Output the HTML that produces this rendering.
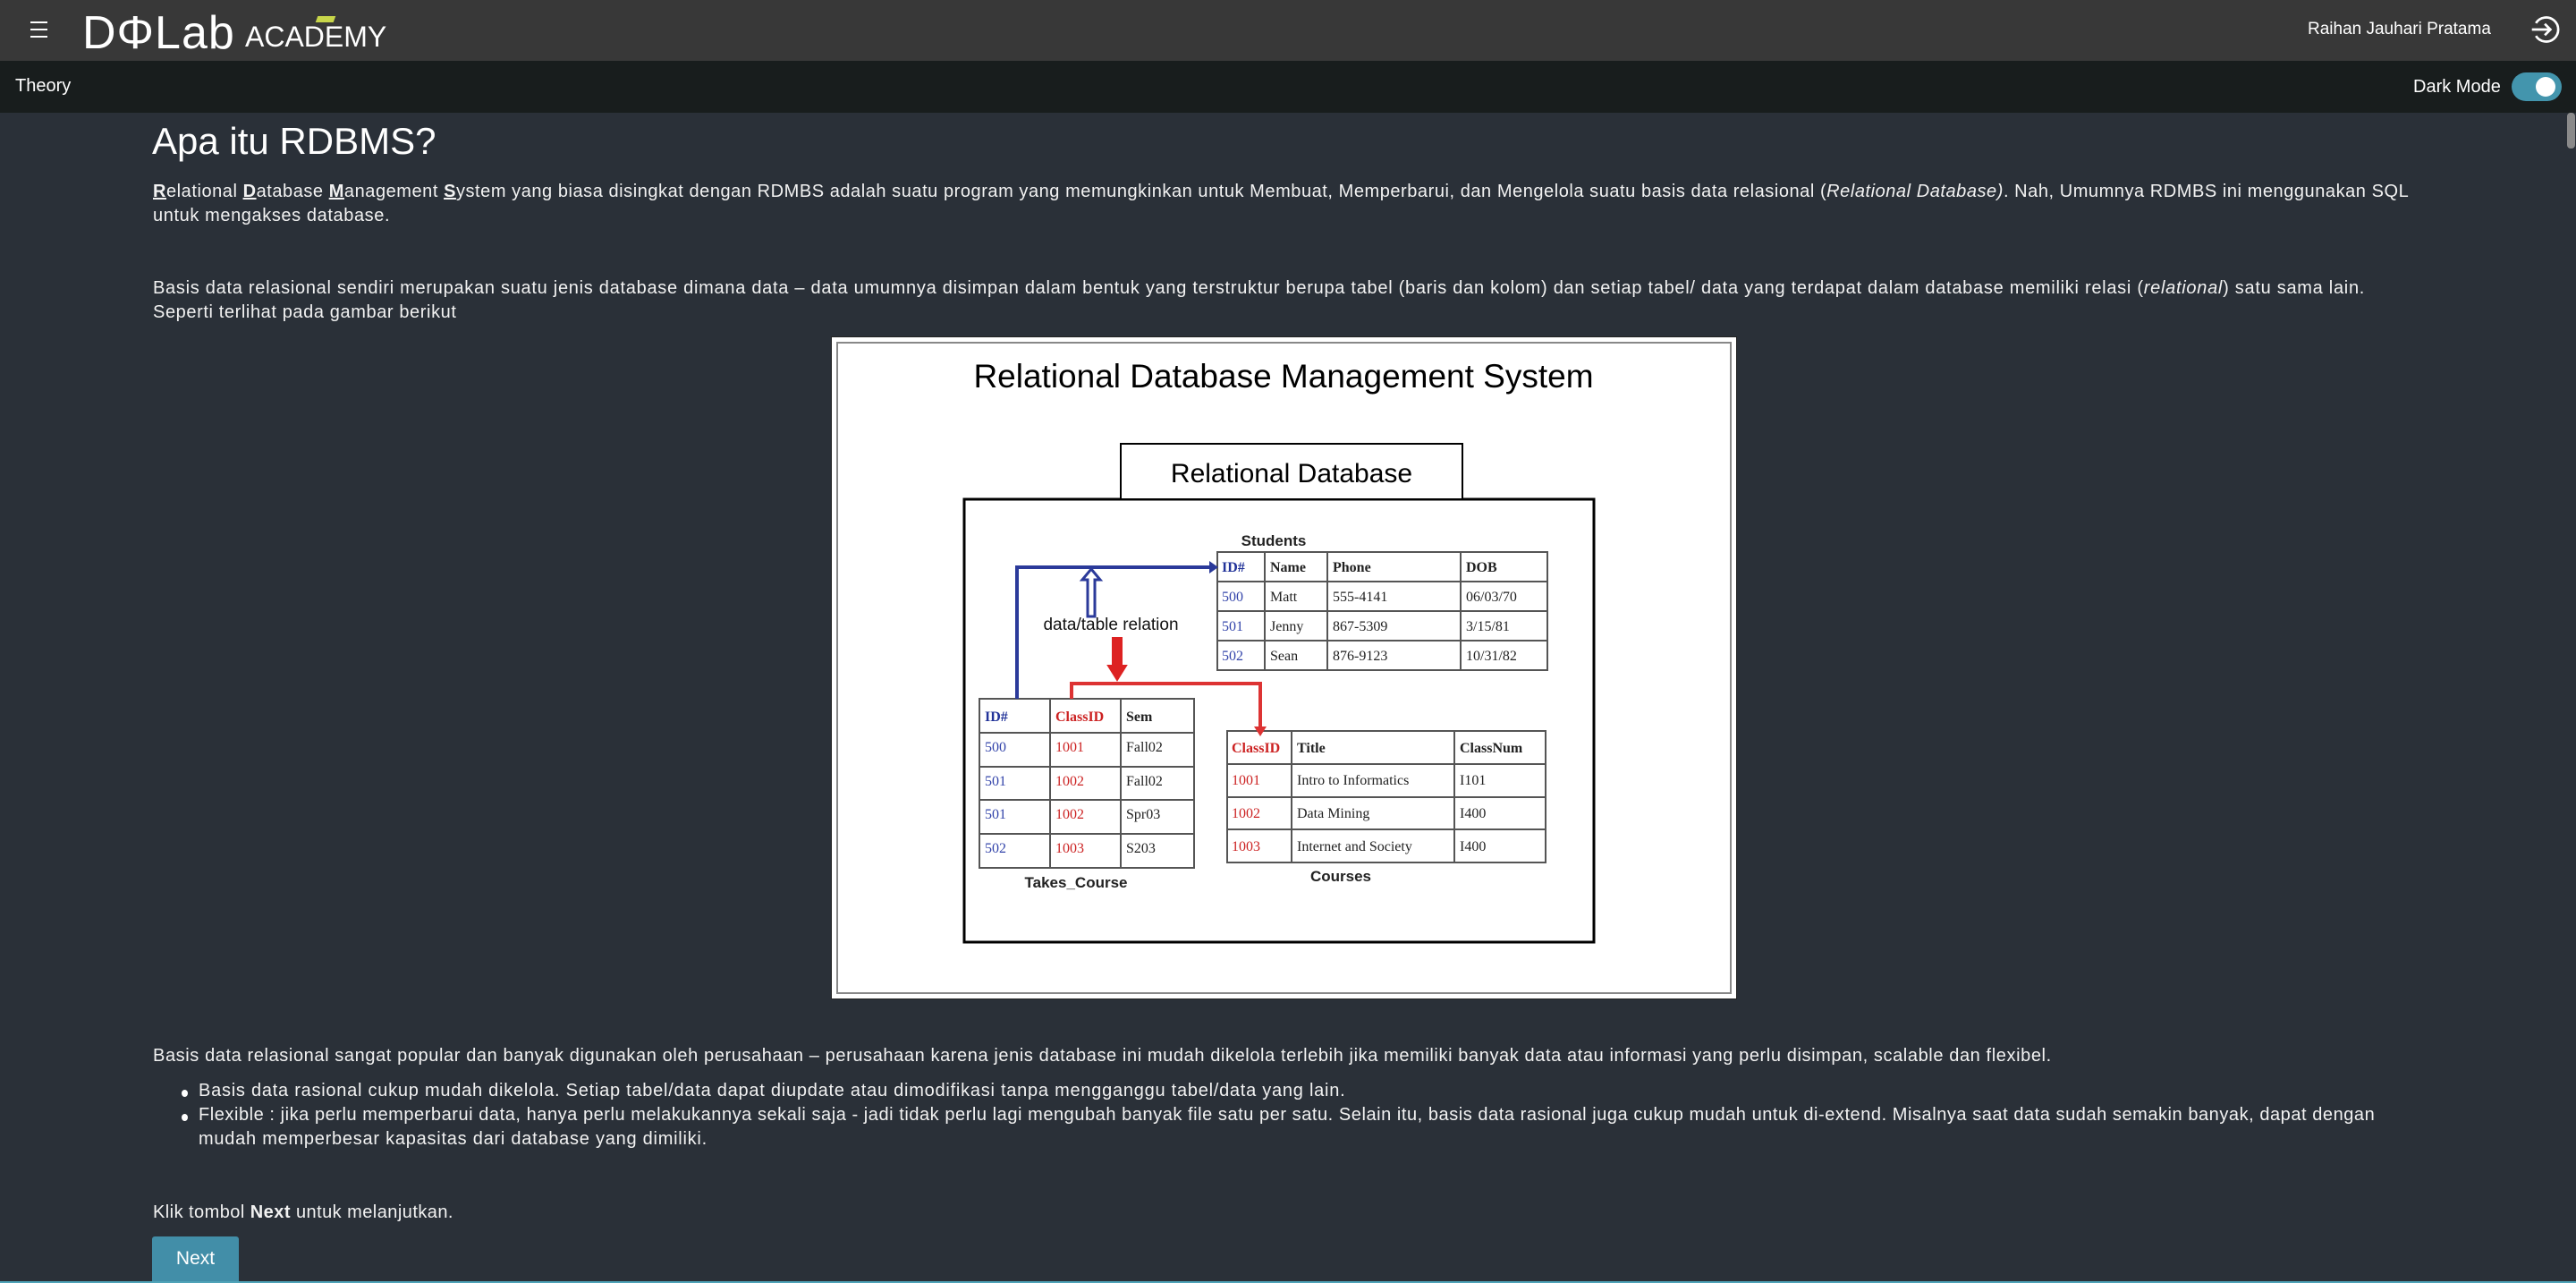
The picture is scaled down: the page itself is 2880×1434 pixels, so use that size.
<!DOCTYPE html>
<html><head><meta charset="utf-8"><style>
*{margin:0;padding:0;box-sizing:border-box}
body{width:2880px;height:1434px;overflow:hidden;background:#2a3038;font-family:"Liberation Sans",sans-serif;color:#fff;position:relative}
.a{position:absolute;white-space:nowrap}
.t{font-size:20px;letter-spacing:0.6px;color:#f2f2f2}
</style></head><body>
<div class="a" style="left:0;top:0;width:2880px;height:68px;background:#383838"></div>
<div class="a" style="left:0;top:68px;width:2880px;height:58px;background:#181d1d"></div>
<div class="a" style="left:34px;top:24px;width:19px;height:2px;background:#fff"></div>
<div class="a" style="left:34px;top:32px;width:19px;height:2px;background:#fff"></div>
<div class="a" style="left:34px;top:40px;width:19px;height:2px;background:#fff"></div>
<div class="a" style="left:92px;top:11px;font-size:52px;line-height:52px;letter-spacing:1px">DΦLab</div>
<div class="a" style="left:274px;top:25px;font-size:32px;line-height:32px;letter-spacing:0px">ACADEMY</div>
<div class="a" style="left:354px;top:18px;width:20px;height:7px;background:#c8d64a;transform:skewX(-20deg)"></div>
<div class="a" style="left:2580px;top:22px;font-size:19px">Raihan Jauhari Pratama</div>
<svg class="a" style="left:2828px;top:15px" width="36" height="36" viewBox="0 0 40 40"><path d="M8 12 A15 15 0 1 1 8 28" fill="none" stroke="#fff" stroke-width="3"/><path d="M3 20 H26 M19 13 L26 20 L19 27" fill="none" stroke="#fff" stroke-width="3"/></svg>
<div class="a" style="left:17px;top:85px;font-size:20px">Theory</div>
<div class="a" style="left:2698px;top:86px;font-size:20px">Dark Mode</div>
<div class="a" style="left:2808px;top:81px;width:56px;height:32px;border-radius:16px;background:#4395ad"></div>
<div class="a" style="left:2835px;top:86px;width:22px;height:22px;border-radius:50%;background:#fff"></div>
<div class="a" style="left:2870px;top:126px;width:9px;height:40px;border-radius:4px;background:#8a8a8a"></div>

<div class="a" style="left:170px;top:128px;font-size:42px;line-height:60px">Apa itu RDBMS?</div>
<div class="a t" style="left:171px;top:203px;letter-spacing:0.55px"><u><b>R</b></u>elational <u><b>D</b></u>atabase <u><b>M</b></u>anagement <u><b>S</b></u>ystem yang biasa disingkat dengan RDMBS adalah suatu program yang memungkinkan untuk Membuat, Memperbarui, dan Mengelola suatu basis data relasional (<i>Relational Database)</i>. Nah, Umumnya RDMBS ini menggunakan SQL</div>
<div class="a t" style="left:171px;top:230px">untuk mengakses database.</div>
<div class="a t" style="left:171px;top:311px;letter-spacing:0.72px">Basis data relasional sendiri merupakan suatu jenis database dimana data – data umumnya disimpan dalam bentuk yang terstruktur berupa tabel (baris dan kolom) dan setiap tabel/ data yang terdapat dalam database memiliki relasi (<i>relational</i>) satu sama lain.</div>
<div class="a t" style="left:171px;top:338px">Seperti terlihat pada gambar berikut</div>

<div class="a" style="left:929px;top:376px;width:1013px;height:741px;background:#fff;border:1px solid #222"></div>
<div class="a" style="left:935px;top:382px;width:1001px;height:729px;border:2px solid #888"></div>
<svg class="a" style="left:0;top:0" width="2880" height="1434" font-family="Liberation Sans, sans-serif">
<text x="1435" y="433" font-size="37" text-anchor="middle" fill="#000">Relational Database Management System</text>
<rect x="1078" y="558" width="704" height="495" fill="none" stroke="#000" stroke-width="3"/>
<rect x="1253" y="496" width="382" height="62" fill="#fff" stroke="#000" stroke-width="2"/>
<text x="1444" y="539" font-size="30" text-anchor="middle" fill="#000">Relational Database</text>
<g font-family="Liberation Serif, serif" font-size="16" fill="#222">
<text x="1424" y="610" font-weight="bold" text-anchor="middle" font-family="Liberation Sans" font-size="17">Students</text>
<g stroke="#555" stroke-width="2" fill="none">
<rect x="1361" y="617" width="369" height="132"/><path d="M1361 650H1730M1361 683H1730M1361 716H1730M1414 617V749M1484 617V749M1633 617V749"/>
<rect x="1095" y="781" width="240" height="189"/><path d="M1095 819H1335M1095 857H1335M1095 894H1335M1095 932H1335M1174 781V970M1253 781V970"/>
<rect x="1372" y="817" width="356" height="147"/><path d="M1372 854H1728M1372 891H1728M1372 927H1728M1444 817V964M1626 817V964"/>
</g>
<text x="1366" y="639" fill="#223399" font-weight="bold">ID#</text><text x="1420" y="639" font-weight="bold">Name</text><text x="1490" y="639" font-weight="bold">Phone</text><text x="1639" y="639" font-weight="bold">DOB</text>
<g fill="#3344aa"><text x="1366" y="672">500</text><text x="1366" y="705">501</text><text x="1366" y="738">502</text></g>
<text x="1420" y="672">Matt</text><text x="1420" y="705">Jenny</text><text x="1420" y="738">Sean</text>
<text x="1490" y="672">555-4141</text><text x="1490" y="705">867-5309</text><text x="1490" y="738">876-9123</text>
<text x="1639" y="672">06/03/70</text><text x="1639" y="705">3/15/81</text><text x="1639" y="738">10/31/82</text>
<text x="1101" y="806" fill="#223399" font-weight="bold">ID#</text><text x="1180" y="806" fill="#cc2222" font-weight="bold">ClassID</text><text x="1259" y="806" font-weight="bold">Sem</text>
<g fill="#3344aa"><text x="1101" y="840">500</text><text x="1101" y="878">501</text><text x="1101" y="915">501</text><text x="1101" y="953">502</text></g>
<g fill="#cc2222"><text x="1180" y="840">1001</text><text x="1180" y="878">1002</text><text x="1180" y="915">1002</text><text x="1180" y="953">1003</text></g>
<text x="1259" y="840">Fall02</text><text x="1259" y="878">Fall02</text><text x="1259" y="915">Spr03</text><text x="1259" y="953">S203</text>
<text x="1203" y="992" font-weight="bold" text-anchor="middle" font-family="Liberation Sans" font-size="17">Takes_Course</text>
<text x="1377" y="841" fill="#cc2222" font-weight="bold">ClassID</text><text x="1450" y="841" font-weight="bold">Title</text><text x="1632" y="841" font-weight="bold">ClassNum</text>
<g fill="#cc2222"><text x="1377" y="877">1001</text><text x="1377" y="914">1002</text><text x="1377" y="951">1003</text></g>
<text x="1450" y="877">Intro to Informatics</text><text x="1450" y="914">Data Mining</text><text x="1450" y="951">Internet and Society</text>
<text x="1632" y="877">I101</text><text x="1632" y="914">I400</text><text x="1632" y="951">I400</text>
<text x="1499" y="985" font-weight="bold" text-anchor="middle" font-family="Liberation Sans" font-size="17">Courses</text>
</g>
<path d="M1137 781V634H1354" fill="none" stroke="#2b3a9a" stroke-width="4"/><path d="M1352 627L1362 634L1352 641Z" fill="#2b3a9a"/>
<path d="M1216 689V648H1210L1220 636L1230 648H1224V689Z" fill="#fff" stroke="#2b3a9a" stroke-width="3"/>
<text x="1242" y="704" font-size="19" text-anchor="middle" fill="#111">data/table relation</text>
<path d="M1244 713H1254V744H1259L1249 760L1239 744H1244Z" fill="#d22" stroke="#d22" stroke-width="2"/>
<path d="M1198 781V764H1409V815" fill="none" stroke="#d33" stroke-width="4"/><path d="M1402 812L1409 823L1416 812Z" fill="#d33"/>
</svg>

<div class="a t" style="left:171px;top:1169px">Basis data relasional sangat popular dan banyak digunakan oleh perusahaan – perusahaan karena jenis database ini mudah dikelola terlebih jika memiliki banyak data atau informasi yang perlu disimpan, scalable dan flexibel.</div>
<div class="a" style="left:203px;top:1218px;width:7px;height:8px;border-radius:50%;background:#fff"></div>
<div class="a" style="left:203px;top:1245px;width:7px;height:8px;border-radius:50%;background:#fff"></div>
<div class="a t" style="left:222px;top:1208px;letter-spacing:0.75px">Basis data rasional cukup mudah dikelola. Setiap tabel/data dapat diupdate atau dimodifikasi tanpa mengganggu tabel/data yang lain.</div>
<div class="a t" style="left:222px;top:1235px;letter-spacing:0.55px">Flexible : jika perlu memperbarui data, hanya perlu melakukannya sekali saja - jadi tidak perlu lagi mengubah banyak file satu per satu. Selain itu, basis data rasional juga cukup mudah untuk di-extend. Misalnya saat data sudah semakin banyak, dapat dengan</div>
<div class="a t" style="left:222px;top:1262px;letter-spacing:0.75px">mudah memperbesar kapasitas dari database yang dimiliki.</div>
<div class="a t" style="left:171px;top:1344px;letter-spacing:0.45px">Klik tombol <b>Next</b> untuk melanjutkan.</div>
<div class="a" style="left:170px;top:1382px;width:97px;height:52px;background:#428ea8;border-radius:3px 3px 0 0;font-size:21px;text-align:center;line-height:50px">Next</div>
<div class="a" style="left:0;top:1432px;width:2880px;height:2px;background:#4fa3b8"></div>
</body></html>
